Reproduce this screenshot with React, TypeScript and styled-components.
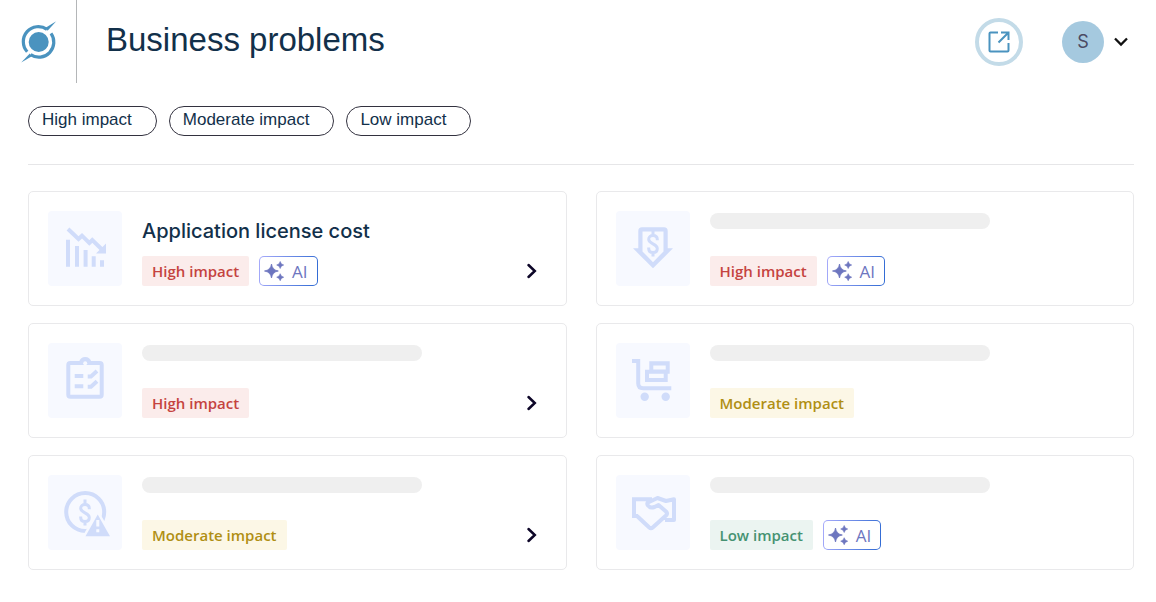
import React from "react";
import styled, { createGlobalStyle } from "styled-components";

const GlobalStyle = createGlobalStyle`
  *, *::before, *::after { box-sizing: border-box; }
  body {
    margin: 0;
    background: #fff;
    color: #12304a;
    font-family: "Liberation Sans", Arial, sans-serif;
  }
  button { font: inherit; color: inherit; cursor: pointer; }
  svg { display: block; }
`;

const Header = styled.header`
  display: flex;
  align-items: center;
  height: 83px;
  padding-right: 28px;
`;

const LogoLink = styled.a`
  display: flex;
  align-items: center;
  align-self: stretch;
  width: 77px;
  padding-left: 20px;
  border-right: 1px solid #b4b6b8;
`;

const PageTitle = styled.h1`
  flex: 1;
  margin: 0;
  padding: 0 0 4px 29px;
  font-size: 33px;
  font-weight: 400;
  line-height: 40px;
`;

const OpenButton = styled.button`
  display: grid;
  place-items: center;
  width: 48px;
  height: 48px;
  margin-right: 39px;
  padding: 0;
  border: 4px solid #c3dbe8;
  border-radius: 50%;
  background: #fff;
`;

const AccountButton = styled.button`
  display: flex;
  align-items: center;
  gap: 10px;
  padding: 0;
  border: 0;
  background: none;
`;

const Avatar = styled.span`
  display: grid;
  place-items: center;
  width: 42px;
  height: 42px;
  border-radius: 50%;
  background: #a5c9df;
  color: #4b4a63;
  font-family: Inter, sans-serif;
  font-size: 18px;
`;

const Main = styled.main`
  padding: 23px 22px 32px 28px;
`;

const Filters = styled.div`
  display: flex;
  flex-wrap: wrap;
  gap: 12px;
  padding-bottom: 28px;
  border-bottom: 1px solid #e6e6e8;
`;

const FilterPill = styled.button`
  height: 30px;
  padding: 0 24px 2px 13px;
  border: 1px solid #33323f;
  border-radius: 15px;
  background: #fff;
  font-size: 17px;
  line-height: 20px;
`;

const CardGrid = styled.div`
  display: grid;
  grid-template-columns: repeat(2, minmax(0, 1fr));
  gap: 17px 29px;
  margin-top: 26px;
`;

const Card = styled.article`
  display: flex;
  gap: 20px;
  padding: 19px;
  border: 1px solid #e9e9eb;
  border-radius: 5px;
`;

const IconTile = styled.div`
  flex: none;
  width: 74px;
  height: 75px;
  border-radius: 4px;
  background: #f7f9ff;
  color: #d0dcfa;
`;

const CardBody = styled.div`
  display: flex;
  flex: 1;
  flex-direction: column;
  justify-content: space-between;
  min-width: 0;
`;

const CardTitle = styled.h2`
  margin: 7px 0 0;
  font-family: Inter, sans-serif;
  font-size: 20px;
  font-weight: 500;
  line-height: 26px;
`;

const Placeholder = styled.div`
  width: 280px;
  max-width: 100%;
  height: 16px;
  margin-top: 2px;
  border-radius: 8px;
  background: #efefef;
`;

const Tags = styled.div`
  display: flex;
  gap: 10px;
`;

type Level = "High" | "Moderate" | "Low";

const tones: Record<Level, { text: string; fill: string }> = {
  High: { text: "#c5433f", fill: "#fbeceb" },
  Moderate: { text: "#b08f14", fill: "#fcf7e6" },
  Low: { text: "#459272", fill: "#ebf4f1" },
};

const ImpactTag = styled.span<{ $level: Level }>`
  padding: 0 10px;
  border-radius: 2px;
  background: ${({ $level }) => tones[$level].fill};
  color: ${({ $level }) => tones[$level].text};
  font-family: "Open Sans", sans-serif;
  font-size: 15px;
  font-weight: 600;
  line-height: 30px;
`;

const AiTag = styled.span`
  display: flex;
  align-items: center;
  gap: 8px;
  height: 30px;
  padding: 0 9px 0 4px;
  border: 1px solid transparent;
  border-radius: 5px;
  background:
    linear-gradient(#fff, #fff) padding-box,
    linear-gradient(100deg, #a9acfb, #2f6ad3) border-box;
  color: #6d76bf;
  font-family: "Open Sans", sans-serif;
  font-size: 17px;
  font-weight: 400;
`;

const OpenCard = styled.button`
  display: grid;
  place-items: center;
  align-self: flex-end;
  width: 30px;
  height: 30px;
  padding: 0;
  border: 0;
  background: none;
`;

const Logo = () => (
  <svg width="38" height="44" viewBox="0 0 38 44" fill="none" aria-hidden="true">
    <circle cx="18.7" cy="22" r="10" fill="#4a93bf" />
    <g stroke="#4a93bf" strokeWidth="3.2">
      <path d="M27 9.4A15 15 0 0 0 7.2 31.7" />
      <path d="M31 13.4A15 15 0 0 1 10.6 34.7" />
    </g>
    <path d="M25.600 7.800 36.200 1.200 27.600 10.800z" fill="#4a93bf" />
    <path d="M11.900 36.200 1.200 42.400 9.800 33.400z" fill="#4a93bf" />
  </svg>
);

const ExternalIcon = () => (
  <svg width="24" height="24" viewBox="0 0 24 24" fill="none" stroke="#4a93bf" strokeWidth="2" aria-hidden="true">
    <path d="M11 2.5H3.5a1 1 0 0 0-1 1v17a1 1 0 0 0 1 1h17a1 1 0 0 0 1-1V13" />
    <path d="M14 2.5h7.5V10M21.5 2.5l-10 10" />
  </svg>
);

const Dollar = () => (
  <path
    d="M37 19.5v4M37 41.5v4M41.3 29.2v-.7c0-2.6-1.8-4-4.3-4s-4.3 1.5-4.3 3.8c0 5 8.6 4 8.6 9.2 0 2.5-1.8 4-4.3 4s-4.3-1.5-4.3-4v-1"
    fill="none"
    stroke="currentColor"
    strokeWidth="3"
  />
);

const icons = {
  decline: (
    <>
      <path fill="currentColor" d="M18 28.7h4v27h-4zM27 35h4v20.700h-4zM35.600 39h4v16.700h-4zM43.700 45.300h4v10.400h-4zM52 49.300h4v6.400h-4zM58 32.500v10H48z" />
      <path fill="none" stroke="currentColor" strokeWidth="4" d="M20 18l10.500 10 3.500-3.300 7.300 7.300 3-3L54.500 39" />
    </>
  ),
  priceDrop: (
    <>
      <path fill="currentColor" fillRule="evenodd" d="M26 16.300h22q3.700 0 3.700 3.700v17.300H57l-20 20-20-20h5.300V20q0-3.700 3.700-3.700zM26.500 20.400v20L37 51.200l10.500-10.800v-20z" />
      <Dollar />
    </>
  ),
  checklist: (
    <>
      <rect x="20.300" y="20" width="33.400" height="33.700" rx="2" fill="none" stroke="currentColor" strokeWidth="4" />
      <path fill="currentColor" d="M31 19q1.500-5 6.200-5t6.200 5v3H31z" />
      <circle cx="37.200" cy="20.300" r="2" fill="#f7f9ff" />
      <path fill="none" stroke="currentColor" strokeWidth="4" d="M26.700 33h8.600M26.700 43.300h8.600M39.700 33.400H43l6-5.400M39.700 43.700H43l6-5.400" />
    </>
  ),
  cart: (
    <>
      <path fill="none" stroke="currentColor" strokeWidth="4" d="M16 18h6.200v22.300q0 5 5 5h28.100" />
      <circle cx="28.700" cy="53.800" r="4.200" fill="currentColor" />
      <circle cx="49.700" cy="53.800" r="4.200" fill="currentColor" />
      <path fill="currentColor" fillRule="evenodd" d="M33.300 18.300h20.400v12.400h-2v8.300H29V26.700h4.300zM37.300 22.500v4h12.400v-4zM33 30.700v4.300h14.700v-4.300z" />
    </>
  ),
  costAlert: (
    <>
      <circle cx="37.200" cy="37" r="19" fill="none" stroke="currentColor" strokeWidth="4" />
      <g transform="translate(0 5)"><Dollar /></g>
      <path d="M49.700 39.500 62 61.200H37.500z" fill="currentColor" stroke="#f7f9ff" strokeWidth="5" paintOrder="stroke" />
      <path fill="#f7f9ff" d="M48.300 45h3v6.600h-3zM48.300 54.300h3v3h-3z" />
    </>
  ),
  handshake: (
    <>
      <path
        fill="none"
        stroke="currentColor"
        strokeWidth="4"
        strokeLinejoin="round"
        d="M49 45h9V24.300l-8 1.700-8.500-3-9.500 4.500q-1.500 1 0 3 2 3 6.500 1.500l4-2 7.500 6.500q2 2 0 4L37 52.300q-2 1.800-4 0L21 41"
      />
      <path fill="none" stroke="currentColor" strokeWidth="4" d="M22 41h-4V24.300h18" />
      <path fill="currentColor" d="M28 24h9l-5 5z" />
    </>
  ),
};

const Sparkles = () => (
  <svg width="20" height="20" viewBox="0 0 20 20" fill="currentColor" aria-hidden="true">
    <path d="M7.500 3Q8.300 9 14.300 10 8.300 11 7.500 17 6.700 11 .5 10 6.700 9 7.500 3z" stroke="currentColor" strokeWidth=".8" />
    <path d="M16.200.500Q16.700 3.400 19.700 4 16.700 4.600 16.200 7.500 15.700 4.600 12.700 4 15.700 3.400 16.200.500z" stroke="currentColor" strokeWidth=".6" />
    <path d="M16.200 12.700Q16.700 15.600 19.700 16.200 16.700 16.800 16.200 19.700 15.700 16.800 12.700 16.200 15.700 15.600 16.200 12.700z" stroke="currentColor" strokeWidth=".6" />
  </svg>
);

interface Problem {
  icon: keyof typeof icons;
  level: Level;
  title?: string;
  ai?: boolean;
  opens?: boolean;
}

const problems: Problem[] = [
  { icon: "decline", level: "High", title: "Application license cost", ai: true, opens: true },
  { icon: "priceDrop", level: "High", ai: true },
  { icon: "checklist", level: "High", opens: true },
  { icon: "cart", level: "Moderate" },
  { icon: "costAlert", level: "Moderate", opens: true },
  { icon: "handshake", level: "Low", ai: true },
];

const levels: Level[] = ["High", "Moderate", "Low"];

const ProblemCard = ({ icon, level, title, ai, opens }: Problem) => (
  <Card>
    <IconTile>
      <svg width="74" height="74" viewBox="0 0 74 74" aria-hidden="true">{icons[icon]}</svg>
    </IconTile>
    <CardBody>
      {title ? <CardTitle>{title}</CardTitle> : <Placeholder />}
      <Tags>
        <ImpactTag $level={level}>{level} impact</ImpactTag>
        {ai && <AiTag><Sparkles />AI</AiTag>}
      </Tags>
    </CardBody>
    {opens && (
      <OpenCard type="button" aria-label="Open problem">
        <svg width="12" height="16" viewBox="0 0 12 16" fill="none" stroke="#0d0628" strokeWidth="2.500" aria-hidden="true">
          <path d="M2.500 2 8.800 8l-6.300 6" strokeLinecap="round" />
        </svg>
      </OpenCard>
    )}
  </Card>
);

export default function App() {
  return (
    <>
      <GlobalStyle />
      <Header>
        <LogoLink href="#" aria-label="Home"><Logo /></LogoLink>
        <PageTitle>Business problems</PageTitle>
        <OpenButton type="button" aria-label="Open in new window"><ExternalIcon /></OpenButton>
        <AccountButton type="button" aria-label="Account menu">
          <Avatar>S</Avatar>
          <svg width="14" height="10" viewBox="0 0 14 10" fill="none" stroke="#111" strokeWidth="2.300" aria-hidden="true">
            <path d="M1 1.500l6 6 6-6" />
          </svg>
        </AccountButton>
      </Header>
      <Main>
        <Filters>
          {levels.map((level) => (
            <FilterPill key={level} type="button">{level} impact</FilterPill>
          ))}
        </Filters>
        <CardGrid>
          {problems.map((problem) => <ProblemCard key={problem.icon} {...problem} />)}
        </CardGrid>
      </Main>
    </>
  );
}
